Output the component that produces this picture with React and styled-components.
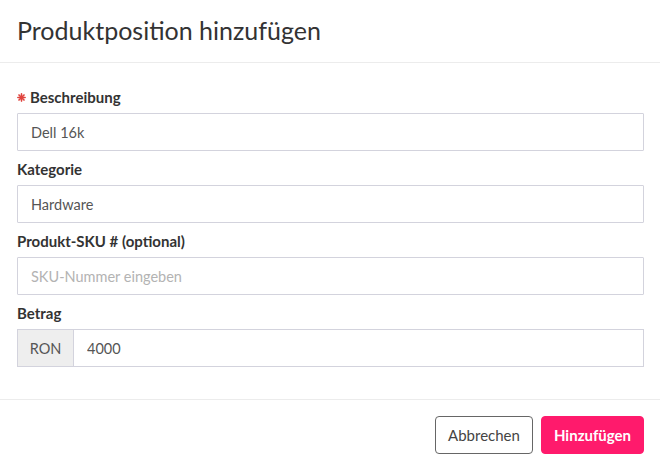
import React, {useState} from 'react';
import styled, {createGlobalStyle} from "styled-components";

const GlobalStyle = createGlobalStyle`
  html, body {
    margin: 0;
    padding: 0;
    background: #fff;
  }
  body {
    font-family: Lato, "Liberation Sans", sans-serif;
    color: #333;
  }
  * {
    box-sizing: border-box;
  }
`;

function RequiredMark() {
    return (
        <Star viewBox="0 0 10 10">
            <g stroke="#e0443e" strokeWidth="1.8" strokeLinecap="round">
                <line x1="5" y1="1" x2="5" y2="9"/>
                <line x1="1" y1="5" x2="9" y2="5"/>
                <line x1="2.2" y1="2.2" x2="7.8" y2="7.8"/>
                <line x1="7.8" y1="2.2" x2="2.2" y2="7.8"/>
            </g>
        </Star>
    );
}

function App() {
    const [description, setDescription] = useState("Dell 16k");
    const [category, setCategory] = useState("Hardware");
    const [sku, setSku] = useState("");
    const [amount, setAmount] = useState("4000");

    return (
        <Modal>
            <GlobalStyle/>
            <Header>
                <Title>Produktposition hinzufügen</Title>
            </Header>
            <Body>
                <Field>
                    <Label><RequiredMark/>Beschreibung</Label>
                    <Input value={description} onChange={(e) => setDescription(e.target.value)}/>
                </Field>
                <Field>
                    <Label>Kategorie</Label>
                    <Input value={category} onChange={(e) => setCategory(e.target.value)}/>
                </Field>
                <Field>
                    <Label>Produkt-SKU # (optional)</Label>
                    <Input value={sku} placeholder="SKU-Nummer eingeben"
                           onChange={(e) => setSku(e.target.value)}/>
                </Field>
                <Field>
                    <Label>Betrag</Label>
                    <InputGroup>
                        <Addon>RON</Addon>
                        <Input $grouped value={amount} onChange={(e) => setAmount(e.target.value)}/>
                    </InputGroup>
                </Field>
            </Body>
            <Footer>
                <Button $width={98}>Abbrechen</Button>
                <Button $primary $width={103}>Hinzufügen</Button>
            </Footer>
        </Modal>
    );
}

export default App;

const Modal = styled.div`
  width: 660px;
  height: 470px;
  display: flex;
  flex-direction: column;
  background: #fff;
`;

const Header = styled.div`
  height: 63px;
  flex-shrink: 0;
  padding: 0 16px 0 17px;
  display: flex;
  align-items: center;
  border-bottom: 1px solid #ececec;
`;

const Title = styled.h1`
  margin: 0 0 3px;
  font-size: 25px;
  font-weight: 400;
  color: #333;
  letter-spacing: 0;
`;

const Body = styled.div`
  padding: 24px 16px 32px 17px;
  display: flex;
  flex-direction: column;
  gap: 8px;
  border-bottom: 1px solid #ececec;
`;

const Field = styled.div`
  display: flex;
  flex-direction: column;
  gap: 6px;
`;

const Label = styled.label`
  display: flex;
  align-items: center;
  gap: 4px;
  height: 20px;
  font-size: 15px;
  font-weight: 700;
  color: #333;
`;

const Star = styled.svg`
  width: 9px;
  height: 9px;
`;

const Input = styled.input`
  height: 38px;
  min-height: 38px;
  width: 100%;
  flex: ${({$grouped}) => ($grouped ? "1" : "none")};
  border: 1px solid #d3d3dd;
  border-radius: ${({$grouped}) => ($grouped ? "0" : "1px")};
  border-left-width: ${({$grouped}) => ($grouped ? "0" : "1px")};
  padding: 0 13px;
  font-family: Lato, "Liberation Sans", sans-serif;
  font-size: 14.5px;
  color: #555;
  outline: none;
  background: #fff;

  &::placeholder {
    color: #b3b3b3;
  }
`;

const InputGroup = styled.div`
  display: flex;
  height: 38px;
`;

const Addon = styled.span`
  display: flex;
  align-items: center;
  justify-content: center;
  width: 57px;
  height: 38px;
  background: #eeeeee;
  border: 1px solid #d3d3dd;
  font-size: 14.5px;
  color: #555;
`;

const Footer = styled.div`
  display: flex;
  justify-content: flex-end;
  gap: 8px;
  padding: 16px 16px 0 17px;
`;

const Button = styled.button`
  width: ${({$width}) => $width}px;
  height: 38px;
  padding: 0;
  border-radius: 4px;
  font-family: Lato, "Liberation Sans", sans-serif;
  font-size: 15px;
  font-weight: ${({$primary}) => ($primary ? 700 : 400)};
  cursor: pointer;
  border: 1px solid ${({$primary}) => ($primary ? "#ff1a6c" : "#666")};
  background: ${({$primary}) => ($primary ? "#ff1a6c" : "#fff")};
  color: ${({$primary}) => ($primary ? "#fff" : "#444")};
`;
